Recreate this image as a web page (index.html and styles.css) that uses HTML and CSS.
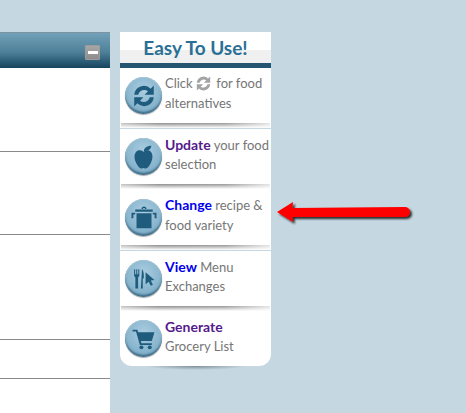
FILE: index.html
```html
<!DOCTYPE html>
<html lang="en">
    <head>
        <meta charset="utf-8">
        <title>Easy To Use</title>
        <link rel="stylesheet" href="styles.css">
    </head>
    <body>
    <div class="panel">
        <div class="panel-head">
            <span class="min-btn"><i></i></span>
        </div>
        <div class="panel-row r1"></div>
        <div class="panel-row r2"></div>
        <div class="panel-row r3"></div>
        <div class="panel-row r4"></div>
    </div>

    <div class="side">
        <div class="side-title"><h2>Easy To Use!</h2></div>

        <div class="tip t1">
            <span class="ico">
                <svg class="g-refresh" viewBox="3 3 18 18"><path d="M4 11a8 8 0 0 1 13.500-5L20 3.500V11h-7.500l2.800-2.800A5 5 0 0 0 7.300 11z"/><path d="M20 13a8 8 0 0 1-13.500 5L4 20.500V13h7.500l-2.800 2.800a5 5 0 0 0 8-2.800z"/></svg>
            </span>
            <p>Click <svg class="inline-ico" viewBox="3 3 18 18"><path d="M4 11a8 8 0 0 1 13.500-5L20 3.500V11h-7.500l2.800-2.800A5 5 0 0 0 7.300 11z"/><path d="M20 13a8 8 0 0 1-13.500 5L4 20.500V13h7.500l-2.800 2.800a5 5 0 0 0 8-2.800z"/></svg> for food<br>alternatives</p>
        </div>
        <div class="sep"></div>

        <div class="tip t2 lined">
            <span class="ico">
                <svg class="g-apple" viewBox="0 0 24 24"><path d="M12 8c-2-1.500-4.500-1.500-6 0-2 2-1.800 6 0 9.500C7.200 20 8.800 22 10.500 22c.7 0 1-.4 1.500-.4s.8.400 1.500.4c1.700 0 3.300-2 4.500-4.500 1.800-3.500 2-7.500 0-9.500-1.500-1.500-4-1.500-6 0z"/><path d="M12.200 7.500C12.500 5 14.500 3 18.500 3c-.3 2.800-2.500 4.500-6.300 4.500z"/></svg>
            </span>
            <p><a class="seen">Update</a> your food<br>selection</p>
        </div>
        <div class="sep"></div>

        <div class="tip t3">
            <span class="ico">
                <svg class="g-pot" viewBox="0 0 24 24"><path d="M10 5.500a2 2 0 0 1 4 0h-1.200a.8.800 0 0 0-1.600 0z"/><path d="M5 6h14v1.800H5z"/><path d="M6 9h12v12H6z"/><path d="M2 8.500h3v1.500H3.500v3H2zM22 8.500h-3v1.500h1.500v3H22z"/></svg>
            </span>
            <p><a>Change</a> recipe &amp;<br>food variety</p>
        </div>
        <div class="sep"></div>

        <div class="tip t4 lined">
            <span class="ico">
                <svg viewBox="0 0 24 24"><path d="M3 3h1v5h1V3h1v5h1V3h1v6.500L6.800 11v10.500H4.200V11L3 9.500z"/><path d="M10.500 3c1.500 1 2 4.500 1.800 9h-1v9.500h-1.800z"/><path d="M14 6l8.500 7.500-3.500.5 2 4-2 1-2-4-3 2.500z"/></svg>
            </span>
            <p><a>View</a> Menu<br>Exchanges</p>
        </div>
        <div class="sep"></div>

        <div class="tip t5">
            <span class="ico">
                <svg viewBox="0 0 24 24"><path d="M1.500 3.500H6L7 6h15.500l-2.500 8.500H9.500l.5 2h10v1.800H8.500L4.800 5.300H1.500z"/><circle cx="10" cy="20.500" r="1.900"/><circle cx="18" cy="20.500" r="1.900"/></svg>
            </span>
            <p><a class="seen">Generate</a><br>Grocery List</p>
        </div>
    </div>

    <svg class="arrow" width="150" height="40" viewBox="0 0 150 40">
        <defs>
            <filter id="sh" x="-10%" y="-40%" width="120%" height="180%">
                <feDropShadow dx="2" dy="2" stdDeviation="1.200" flood-color="#000" flood-opacity=".8"/>
            </filter>
        </defs>
        <path filter="url(#sh)" fill="#fe0000" d="M7 22 23 12 22.500 18 135 17a5 5 0 0 1 0 10L22.500 27 23 32z"/>
    </svg>
    </body>
</html>
```

FILE: styles.css
```css
html,body{
    margin:0;
    padding:0;
}
body{
    display:flex;
    align-items:flex-start;
    gap:10px;
    height:413px;
    overflow:hidden;
    padding-top:32px;
    box-sizing:border-box;
    background:#c5d7e0;
    font-family:"Lato","Open Sans",sans-serif;
}
p,h2{
    margin:0;
}

/* left panel */
.panel{
    width:110px;
    height:381px;
    flex:none;
    background:#fff;
}
.panel-head{
    height:36px;
    box-sizing:border-box;
    border-top:1px solid #7d919e;
    background:linear-gradient(#71a1b8,#4f8099 55%,#3a6c86 70%,#16445d);
    display:flex;
    justify-content:flex-end;
    align-items:center;
    padding:3px 10px 0 0;
}
.min-btn{
    width:15px;
    height:15px;
    border-radius:2px;
    background:linear-gradient(#a8a8a8,#8b8b8b);
    box-shadow:inset 0 0 0 1px #9c9c9c;
    display:flex;
    align-items:center;
    justify-content:center;
}
.min-btn i{
    display:block;
    width:10px;
    height:3px;
    background:#fff;
}
.panel-row{
    box-sizing:border-box;
    border-bottom:1px solid #8a8a8a;
}
.r1{height:84px;}
.r2{height:83px;}
.r3{height:105px;}
.r4{height:39px;}

/* easy to use box */
.side{
    width:151px;
    flex:none;
    background:#fff;
    border-radius:0 0 12px 12px;
    position:relative;
}
.side::after{
    content:"";
    position:absolute;
    left:25px;
    right:25px;
    bottom:-4px;
    height:4px;
    background:radial-gradient(ellipse at top,#7f8f98,rgba(127,143,152,0) 70%);
}
.side-title{
    height:36px;
    box-sizing:border-box;
    border-bottom:5px solid #24566f;
    background:linear-gradient(#fff 18px,#f0f0f0 18px);
}
.side-title h2{
    font-size:19px;
    line-height:31px;
    text-align:center;
    color:#2a7096;
}
.tip{
    display:flex;
    align-items:center;
    gap:3px;
    padding-left:5px;
    font-size:13px;
    line-height:19.500px;
    color:#767676;
    white-space:nowrap;
}
.tip p{
    margin-bottom:4px;
}
.t1{height:55px;}
.t2{height:55px;}
.t3{height:56px;}
.t4{height:55px;}
.t5{height:55px;}
.lined{
    border-top:1px solid #c5d7e0;
}
.tip a{
    font-size:14px;
    font-weight:bold;
    color:#0000ee;
}
.tip a.seen{
    color:#551a8b;
}
.ico{
    width:37px;
    height:37px;
    flex:none;
    border-radius:50%;
    background:radial-gradient(circle at 50% 35%,#aacde0,#84b2cc 65%,#568aa8 100%);
    box-shadow:inset 0 -2px 2px #3f6c86,inset 0 0 0 1px #a6c6d6,0 1px 1px #aaa;
    display:flex;
    align-items:center;
    justify-content:center;
}
.ico svg{
    width:25px;
    height:25px;
    flex:none;
    fill:#1f5b7c;
}
.ico .g-refresh{
    width:22px;
    height:22px;
}
.ico .g-apple{
    width:29px;
    height:29px;
}
.ico .g-pot{
    width:30px;
    height:30px;
}
.inline-ico{
    width:15px;
    height:15px;
    margin:0 2px 0 0;
    vertical-align:-3px;
    fill:#a3a3a3;
}
.sep{
    height:5px;
    margin:0 1px;
    background:linear-gradient(90deg,#c4c4c4,#8f8f8f 25%,#9a9a9a 70%,#e4e4e4);
    -webkit-mask-image:linear-gradient(#000,transparent);
    mask-image:linear-gradient(#000,transparent);
}

/* red pointer */
.arrow{
    position:absolute;
    left:270px;
    top:190px;
}
```
